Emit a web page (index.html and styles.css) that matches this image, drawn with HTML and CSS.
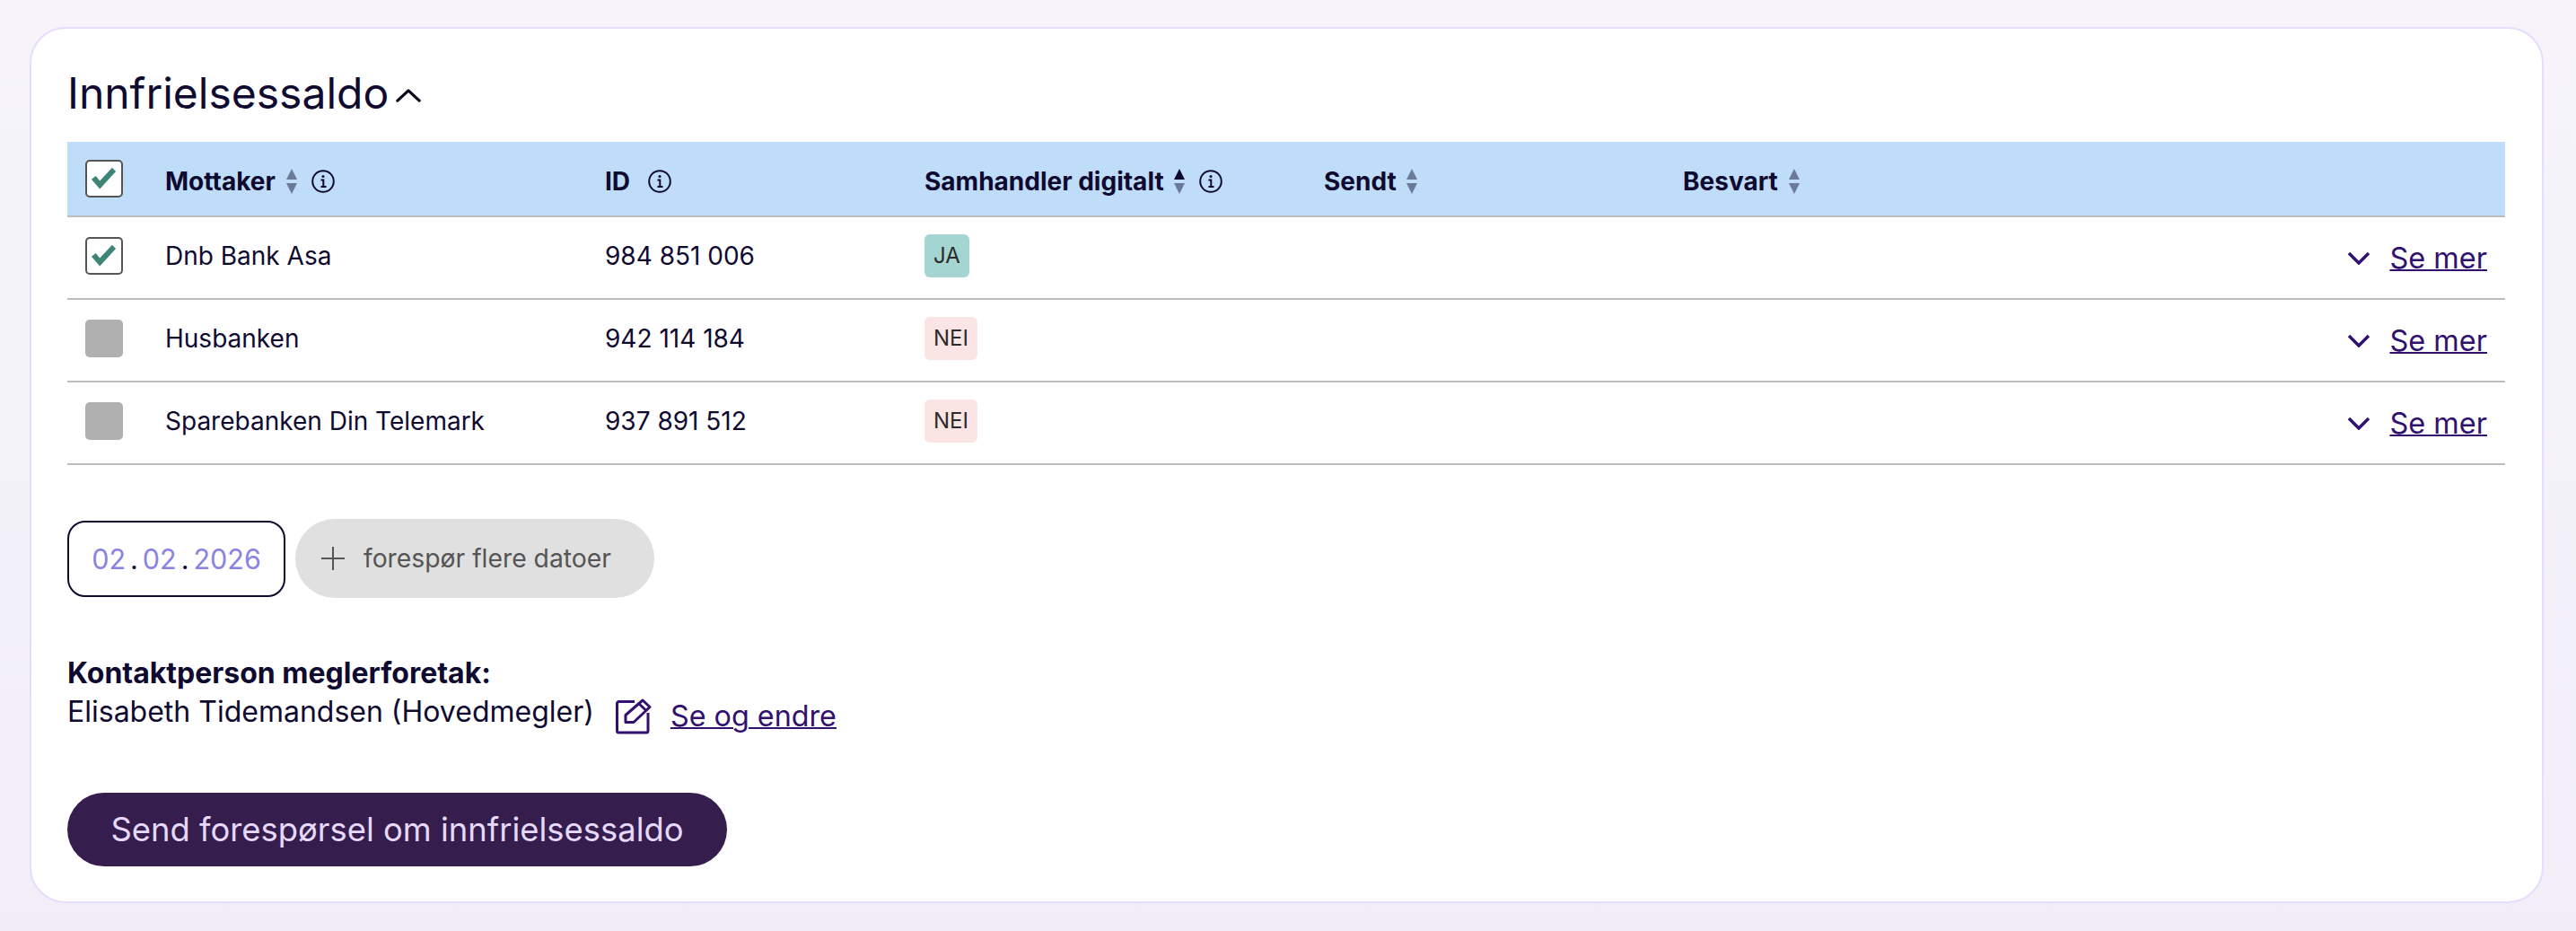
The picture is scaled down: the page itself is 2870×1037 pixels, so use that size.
FILE: index.html
```html
<!DOCTYPE html>
<html lang="no">
<head>
<meta charset="utf-8">
<title>Innfrielsessaldo</title>
<link rel="stylesheet" href="styles.css">
</head>
<body>
<section class="card">
  <h2 class="title">Innfrielsessaldo<svg class="title-chevron" viewBox="0 0 30 18"><path d="M2 15 15 3l13 12"/></svg></h2>
  <div class="table">
    <div class="row head">
      <div class="cell-check"><span class="check"><svg viewBox="0 0 37 37"><path d="M4.800 19.200 9.500 15.500 13.800 21 27.200 6.500 31.200 10.800 13.800 29.800z"/></svg></span></div>
      <div class="th">Mottaker <svg class="sort" viewBox="0 0 12 28"><path class="off" d="M6 0l6 12H0z"/><path class="off" d="M0 16h12L6 28z"/></svg><svg class="info" viewBox="0 0 26 26"><circle cx="13" cy="13" r="11.8"/><path d="M10.5 11.5H13.3V19M10.5 19h6"/><circle class="dot" cx="13" cy="7.4" r="1.5"/></svg></div>
      <div class="th">ID <svg class="info info-id" viewBox="0 0 26 26"><circle cx="13" cy="13" r="11.8"/><path d="M10.5 11.5H13.3V19M10.5 19h6"/><circle class="dot" cx="13" cy="7.4" r="1.5"/></svg></div>
      <div class="th">Samhandler digitalt <svg class="sort" viewBox="0 0 12 28"><path class="on" d="M6 0l6 12H0z"/><path class="off" d="M0 16h12L6 28z"/></svg><svg class="info" viewBox="0 0 26 26"><circle cx="13" cy="13" r="11.8"/><path d="M10.5 11.5H13.3V19M10.5 19h6"/><circle class="dot" cx="13" cy="7.4" r="1.5"/></svg></div>
      <div class="th">Sendt <svg class="sort" viewBox="0 0 12 28"><path class="off" d="M6 0l6 12H0z"/><path class="off" d="M0 16h12L6 28z"/></svg></div>
      <div class="th">Besvart <svg class="sort" viewBox="0 0 12 28"><path class="off" d="M6 0l6 12H0z"/><path class="off" d="M0 16h12L6 28z"/></svg></div>
      <div></div>
    </div>
    <div class="row body-row">
      <div class="cell-check"><span class="check"><svg viewBox="0 0 37 37"><path d="M4.800 19.200 9.500 15.500 13.800 21 27.200 6.500 31.200 10.800 13.800 29.800z"/></svg></span></div>
      <div class="td">Dnb Bank Asa</div>
      <div class="td">984 851 006</div>
      <div class="td"><span class="badge yes">JA</span></div>
      <div></div><div></div>
      <div class="more"><svg class="chev" viewBox="0 0 26 15"><path d="M2 2l11 11L24 2"/></svg><a class="link" href="#">Se mer</a></div>
    </div>
    <div class="row body-row">
      <div class="cell-check"><span class="check off-check"></span></div>
      <div class="td">Husbanken</div>
      <div class="td">942 114 184</div>
      <div class="td"><span class="badge no">NEI</span></div>
      <div></div><div></div>
      <div class="more"><svg class="chev" viewBox="0 0 26 15"><path d="M2 2l11 11L24 2"/></svg><a class="link" href="#">Se mer</a></div>
    </div>
    <div class="row body-row">
      <div class="cell-check"><span class="check off-check"></span></div>
      <div class="td">Sparebanken Din Telemark</div>
      <div class="td">937 891 512</div>
      <div class="td"><span class="badge no">NEI</span></div>
      <div></div><div></div>
      <div class="more"><svg class="chev" viewBox="0 0 26 15"><path d="M2 2l11 11L24 2"/></svg><a class="link" href="#">Se mer</a></div>
    </div>
  </div>
  <div class="dates">
    <div class="date">02<span class="sep">.</span>02<span class="sep">.</span>2026</div>
    <button class="add" type="button"><svg viewBox="0 0 28 28"><path d="M14 1v26M1 14h26"/></svg>forespør flere datoer</button>
  </div>
  <div class="contact">
    <div class="contact-label">Kontaktperson meglerforetak:</div>
    <div class="contact-line">
      <span class="contact-name">Elisabeth Tidemandsen (Hovedmegler)</span>
      <svg class="edit" viewBox="0 0 40 40"><path d="M21 3.500H3.500a2 2 0 0 0-2 2V36a2 2 0 0 0 2 2H34a2 2 0 0 0 2-2V16"/><path d="M11 26.500v-8L30 2l8 7.500-18 17zM26 6l8 7.500"/></svg>
      <a class="link" href="#">Se og endre</a>
    </div>
  </div>
  <button class="send" type="button">Send forespørsel om innfrielsessaldo</button>
</section>
</body>
</html>
```
FILE: styles.css
```css
* { box-sizing: border-box; }
html, body { height: 100%; }
body {
  margin: 0;
  padding: 30px 36px 31px 33px;
  background: linear-gradient(#f6f4fa, #f1eef8);
  font-family: Inter, "Liberation Sans", sans-serif;
  color: #0f0a30;
}
.card {
  height: 976px;
  background: #fff;
  border: 2px solid #e6dcfb;
  border-radius: 40px;
  padding: 0 41px 0 40px;
}
.title {
  margin: 0;
  height: 126px;
  padding-top: 44px;
  display: flex;
  align-items: flex-start;
  gap: 8px;
  font-size: 48px;
  font-weight: 400;
  line-height: 56px;
}
.title-chevron {
  width: 28px;
  height: 17px;
  margin-top: 22px;
  fill: none;
  stroke: #0a0a1a;
  stroke-width: 3.500;
  stroke-linecap: round;
  stroke-linejoin: round;
}
.row {
  display: grid;
  grid-template-columns: 109px 490px 356px 445px 400px 1fr auto;
  align-items: center;
  height: 92px;
  border-bottom: 2px solid #bdbdbd;
  font-size: 28px;
  padding-right: 20px;
}
.row.head { height: 84px; background: #bfddf8; }
.body-row .cell-check, .td { padding-bottom: 5px; }
.cell-check { padding-left: 20px; display: flex; }
.check {
  width: 42px;
  height: 42px;
  display: block;
  border: 2.500px solid #555;
  border-radius: 5px;
  background: #fff;
}
.check svg { display: block; width: 100%; height: 100%; fill: #3f8577; }
.off-check { background: #b0b0b0; border: 0; }
.th { display: flex; align-items: center; font-weight: 700; white-space: pre; padding-top: 6px; }
.sort { width: 12px; height: 28px; margin-left: 5px; }
.sort .off { fill: #6b7a99; }
.sort .on { fill: #0f0a30; }
.info { width: 26px; height: 26px; margin-left: 16px; fill: none; stroke: #0f0a30; stroke-width: 2; }
.info .dot { fill: #0f0a30; stroke: none; }
.info-id { margin-left: 13px; }
.td { font-weight: 400; white-space: nowrap; }
.badge {
  display: inline-flex;
  align-items: center;
  justify-content: center;
  height: 48px;
  padding: 0 10px;
  border-radius: 6px;
  font-size: 24px;
  color: #2b2b2b;
  vertical-align: middle;
}
.yes { background: #a5d5d1; }
.no { background: #fbe4e4; }
.more { display: flex; align-items: center; gap: 21px; padding-top: 1px; }
.chev { width: 26px; height: 15px; fill: none; stroke: #32106f; stroke-width: 3.500; }
.link { color: #32106f; font-size: 32.500px; line-height: 36px; text-decoration: underline; text-decoration-thickness: 2px; }
.dates { display: flex; align-items: center; gap: 11px; margin-top: 60px; }
.date {
  width: 243px;
  height: 85px;
  border: 2px solid #0f0a30;
  border-radius: 20px;
  display: flex;
  align-items: center;
  justify-content: center;
  font-size: 30.500px;
  color: #8b83e0;
}
.sep { color: #0f0a30; padding: 0 5px; }
.add {
  display: flex;
  align-items: center;
  gap: 20px;
  width: 400px;
  height: 88px;
  padding: 0 0 0 28px;
  border: 0;
  border-radius: 44px;
  background: #e0e0e0;
  font: inherit;
  font-size: 28.300px;
  color: #555;
}
.add svg { width: 28px; height: 28px; fill: none; stroke: #555; stroke-width: 2; }
.contact { margin-top: 64px; font-size: 32px; }
.contact-label { font-weight: 700; line-height: 40px; }
.contact-line { display: flex; align-items: flex-start; line-height: 40px; margin-top: 3px; }
.edit { width: 40px; height: 40px; margin: 5px 21px 0 24px; flex: none; overflow: visible; fill: none; stroke: #32106f; stroke-width: 3; stroke-linejoin: round; }
.contact-line .link { margin-top: 7px; font-size: 32.300px; }
.send {
  display: block;
  margin-top: 65px;
  width: 735px;
  height: 82px;
  border: 0;
  border-radius: 41px;
  background: #351e4d;
  color: #e6d9fb;
  font: inherit;
  font-size: 36.400px;
}
```
